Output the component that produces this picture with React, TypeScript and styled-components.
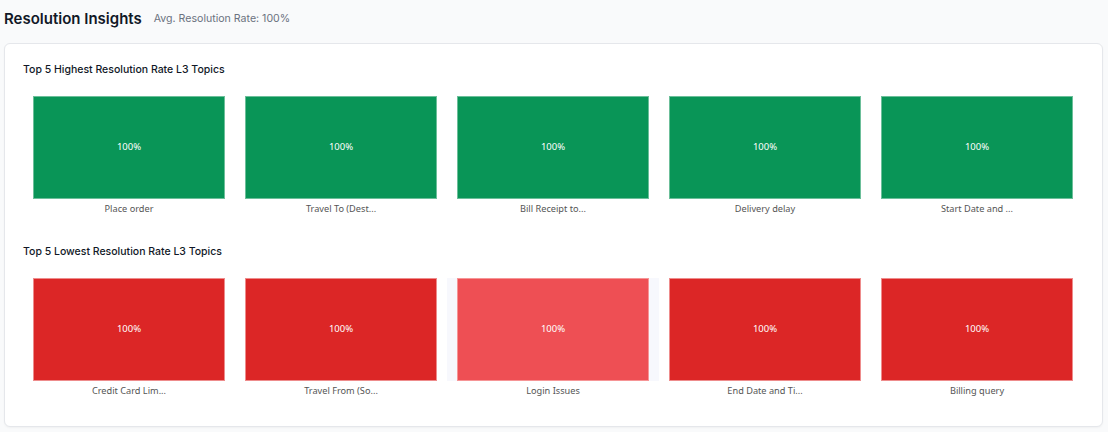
import React from "react"
import styled, { createGlobalStyle } from "styled-components"

const GlobalStyle = createGlobalStyle`
  html, body {
    margin: 0;
    padding: 0;
    background: #f9fafb;
    font-family: Inter, "Liberation Sans", sans-serif;
  }
`

const Page = styled.div`
  width: 1108px;
  height: 432px;
  box-sizing: border-box;
  padding: 0 5px 5px 4px;
  overflow: hidden;
`

const Header = styled.div`
  height: 43px;
  box-sizing: border-box;
  padding-bottom: 6px;
  display: flex;
  align-items: center;
  gap: 12px;
`

const Title = styled.h1`
  margin: 0;
  font-size: 15px;
  line-height: 24px;
  font-weight: 600;
  color: #111827;
`

const Subtitle = styled.span`
  font-size: 10.6px;
  line-height: 16px;
  color: #6b7280;
`

const Card = styled.div`
  height: 384px;
  box-sizing: border-box;
  padding: 17px 18px 0;
  background: #ffffff;
  border: 1px solid #e5e7eb;
  border-radius: 6px;
  box-shadow: 0 1px 2px rgba(0, 0, 0, 0.04);
`

const Section = styled.section`
  margin-bottom: 27px;
`

const SectionTitle = styled.h2`
  margin: 0 0 18px;
  font-size: 10.5px;
  line-height: 17px;
  font-weight: 500;
  color: #111827;
`

const Tiles = styled.div`
  display: grid;
  grid-template-columns: repeat(5, 192px);
  gap: 20px;
  padding-left: 10px;
`

const Tile = styled.div`
  display: flex;
  flex-direction: column;
  align-items: center;
`

const Block = styled.div<{ $color: string; $edge: string; $hovered?: boolean }>`
  width: 100%;
  height: 103px;
  box-sizing: border-box;
  padding-bottom: 2px;
  display: flex;
  align-items: center;
  justify-content: center;
  background: ${props => props.$color};
  border: 1px solid ${props => props.$edge};
  box-shadow: ${props => props.$hovered ? "-10px 0 0 #f7f8fd, 10px 0 0 #f7f8fd" : "none"};
  font-family: "Noto Sans", "Open Sans", sans-serif;
  font-size: 9.5px;
  color: #ffffff;
`

const Label = styled.div`
  margin-top: 3px;
  font-family: "Noto Sans", "Open Sans", sans-serif;
  font-size: 9.2px;
  line-height: 14px;
  color: #555555;
`

const GREEN = { color: "#099557", edge: "#6cbf9a" }
const RED = { color: "#dc2626", edge: "#ee8c8c" }
const LIGHT_RED = { color: "#ee4f54", edge: "#f69596", hovered: true }

const sections = [
  {
    title: "Top 5 Highest Resolution Rate L3 Topics",
    tiles: [
      { label: "Place order", ...GREEN },
      { label: "Travel To (Dest...", ...GREEN },
      { label: "Bill Receipt to...", ...GREEN },
      { label: "Delivery delay", ...GREEN },
      { label: "Start Date and ...", ...GREEN }
    ]
  },
  {
    title: "Top 5 Lowest Resolution Rate L3 Topics",
    tiles: [
      { label: "Credit Card Lim...", ...RED },
      { label: "Travel From (So...", ...RED },
      { label: "Login Issues", ...LIGHT_RED },
      { label: "End Date and Ti...", ...RED },
      { label: "Billing query", ...RED }
    ]
  }
]

export default function App(){
  return (
    <Page>
      <GlobalStyle/>

      <Header>
        <Title>Resolution Insights</Title>
        <Subtitle>Avg. Resolution Rate: 100%</Subtitle>
      </Header>

      <Card>
        {sections.map(section => (
          <Section key={section.title}>
            <SectionTitle>{section.title}</SectionTitle>

            <Tiles>
              {section.tiles.map(tile => (
                <Tile key={tile.label}>
                  <Block $color={tile.color} $edge={tile.edge} $hovered={"hovered" in tile}>100%</Block>
                  <Label>{tile.label}</Label>
                </Tile>
              ))}
            </Tiles>
          </Section>
        ))}
      </Card>
    </Page>
  )
}
